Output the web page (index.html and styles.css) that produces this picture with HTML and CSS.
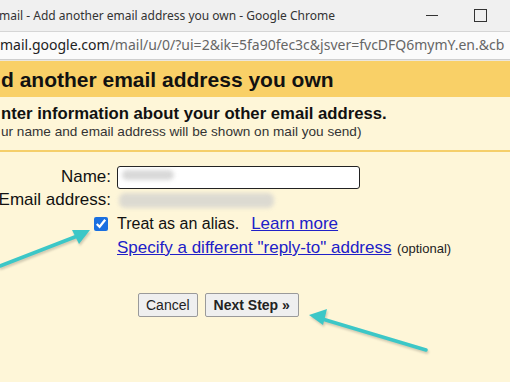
FILE: index.html
```html
<!DOCTYPE html>
<html lang="en">
<head>
    <meta charset="UTF-8">
    <title>Gmail - Add another email address you own</title>
    <link rel="stylesheet" href="styles.css">
</head>
<body>
    <div class="titlebar">
        <span class="title">mail - Add another email address you own - Google Chrome</span>
        <div class="controls">
            <span class="minimize"></span>
            <span class="maximize"></span>
        </div>
    </div>
    <div class="addressbar">
        <span class="host">mail.google.com</span><span class="path">/mail/u/0/?ui=2&amp;ik=5fa90fec3c&amp;jsver=fvcDFQ6mymY.en.&amp;cb</span>
    </div>
    <main class="dialog">
        <h1 class="dialog-title">d another email address you own</h1>
        <div class="intro">
            <h2>nter information about your other email address.</h2>
            <p>ur name and email address will be shown on mail you send)</p>
        </div>
        <div class="form">
            <label class="label" for="name">Name:</label>
            <div class="field">
                <div class="input-box">
                    <input id="name" type="text">
                    <span class="redact redact-name"></span>
                </div>
            </div>

            <span class="label">Email address:</span>
            <div class="field">
                <span class="redact redact-email"></span>
            </div>

            <div class="label"><input id="alias" type="checkbox" checked></div>
            <div class="field">
                <label for="alias">Treat as an alias.</label><a class="learn" href="#">Learn more</a>
            </div>

            <span></span>
            <div class="field">
                <a href="#">Specify a different "reply-to" address</a> <span class="optional">(optional)</span>
            </div>
        </div>
        <div class="buttons">
            <button class="btn">Cancel</button>
            <button class="btn btn-primary">Next Step &raquo;</button>
        </div>
    </main>

    <svg class="arrow arrow-left" width="100" height="50" viewBox="0 0 100 50">
        <line x1="0" y1="40" x2="80" y2="9" />
        <polygon points="90,4 72,4 79,18" />
    </svg>
    <svg class="arrow arrow-right" width="130" height="50" viewBox="0 0 130 50">
        <line x1="123" y1="41" x2="16" y2="9" />
        <polygon points="6,6 24,0 20,16" />
    </svg>
</body>
</html>
```

FILE: styles.css
```css
* {
    margin: 0;
    padding: 0;
    box-sizing: border-box;
}

body {
    width: 510px;
    height: 382px;
    overflow: hidden;
    position: relative;
    background-color: #fef6d8;
    font-family: "Liberation Sans", Arial, sans-serif;
    color: #111111;
}

.titlebar {
    height: 31px;
    background-color: #f0f0f0;
    display: flex;
    justify-content: space-between;
    align-items: center;
    font-family: "Noto Sans", "Open Sans", sans-serif;
    font-size: 12px;
    color: #333333;
}

.title {
    margin-left: -1px;
    padding-bottom: 1px;
}

.controls {
    display: flex;
    align-items: center;
    gap: 36px;
    margin-right: 23px;
}

.minimize {
    width: 12px;
    height: 1px;
    background-color: #333333;
}

.maximize {
    width: 13px;
    height: 13px;
    border: 1px solid #333333;
}

.addressbar {
    height: 29px;
    background-color: #fbfbfb;
    border-top: 1px solid #d6d6d6;
    border-bottom: 1px solid #cfcfcf;
    font-family: "Noto Sans", "Open Sans", sans-serif;
    font-size: 14px;
    line-height: 26px;
    white-space: nowrap;
    overflow: hidden;
}

.host {
    color: #222222;
}

.path {
    color: #666666;
}

.dialog {
    border-top: 1px solid #ebe6dc;
}

.dialog-title {
    height: 36px;
    background-color: #f9d067;
    font-size: 21px;
    font-weight: bold;
    line-height: 37px;
    padding-left: 1px;
    color: #111111;
}

.intro {
    padding: 8px 0 9px 1px;
    border-bottom: 2px solid #f5cf6b;
}

.intro h2 {
    font-size: 16.7px;
    font-weight: bold;
    line-height: 17px;
}

.intro p {
    margin-top: 1px;
    font-size: 13.6px;
    line-height: 18px;
    color: #333333;
}

.form {
    display: grid;
    grid-template-columns: 111px 1fr;
    grid-template-rows: 23px 24px 24px 24px;
    column-gap: 6px;
    padding-top: 13px;
    font-size: 16px;
}

.label {
    display: flex;
    justify-content: flex-end;
    align-items: center;
    white-space: nowrap;
    font-size: 17px;
}

.label input[type="checkbox"] {
    width: 14px;
    height: 14px;
    margin: 0 3px 0 0;
    accent-color: #1a6fe0;
}

.field {
    line-height: 24px;
    position: relative;
    white-space: nowrap;
}

.input-box {
    position: relative;
    width: 243px;
    height: 23px;
}

.input-box input {
    width: 100%;
    height: 100%;
    border: 1px solid #222222;
    border-radius: 3px;
    background-color: #ffffff;
    outline: none;
}

.redact {
    position: absolute;
    background-color: #cfcfcf;
    border-radius: 6px;
    filter: blur(2px);
}

.redact-name {
    left: 5px;
    top: 5px;
    width: 52px;
    height: 10px;
    opacity: 0.8;
}

.redact-email {
    left: 2px;
    top: 5px;
    width: 155px;
    height: 15px;
    opacity: 0.7;
}

a {
    font-size: 17px;
    color: #2020c8;
    text-decoration: underline;
}

.learn {
    margin-left: 12px;
}

.optional {
    margin-left: 1px;
    font-size: 13px;
    color: #222222;
}

.buttons {
    display: flex;
    gap: 7px;
    padding: 33px 0 0 138px;
}

.btn {
    height: 24px;
    padding: 0 7px;
    font-family: "Liberation Sans", Arial, sans-serif;
    font-size: 14px;
    color: #222222;
    background-color: #efefef;
    border: 1px solid #9a9a9a;
    border-radius: 2px;
}

.btn-primary {
    font-weight: bold;
    padding: 0 8px;
}

.arrow {
    position: absolute;
    overflow: visible;
    filter: drop-shadow(1px 2px 1px rgba(0, 0, 0, 0.18));
}

.arrow line {
    stroke: #3cc7c7;
    stroke-width: 3.5;
    stroke-linecap: round;
}

.arrow polygon {
    fill: #3cc7c7;
}

.arrow-left {
    left: 0;
    top: 226px;
}

.arrow-right {
    left: 303px;
    top: 309px;
}
```
